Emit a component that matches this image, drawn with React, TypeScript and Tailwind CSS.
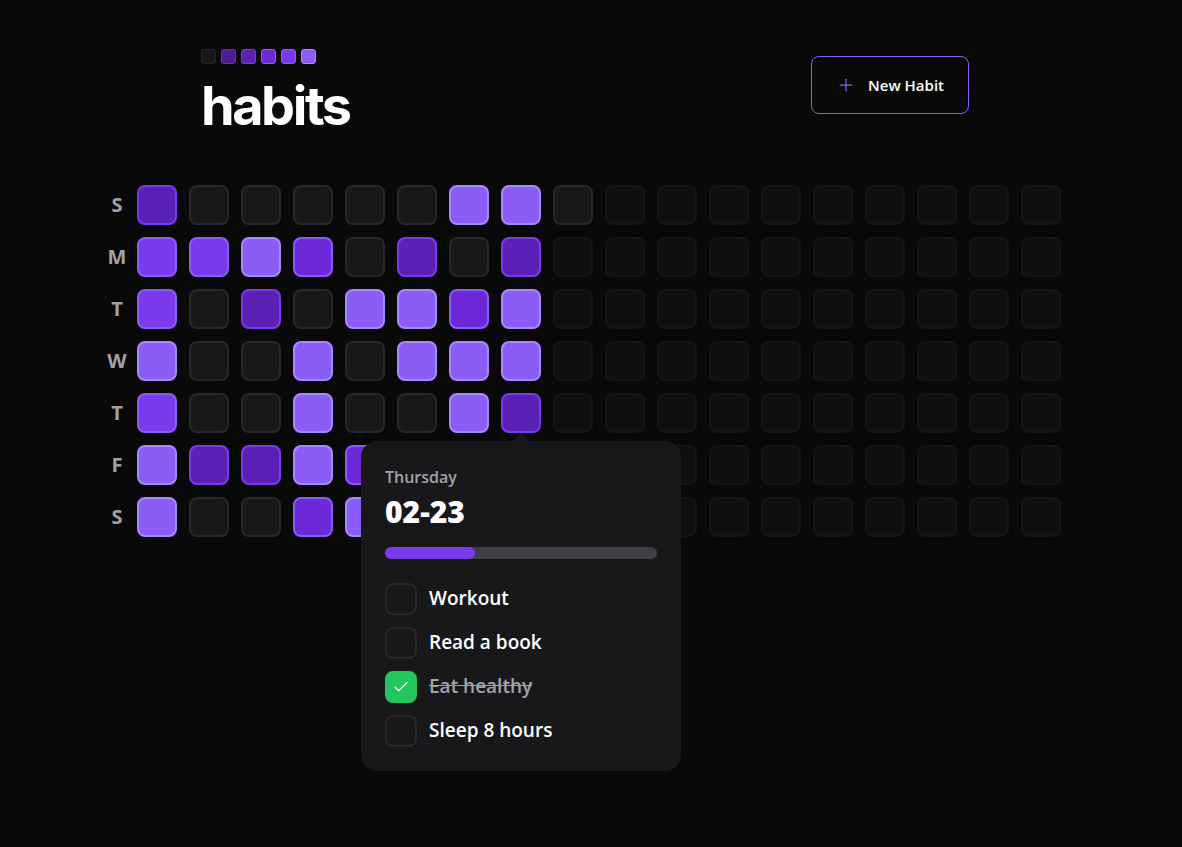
import { Check, Plus } from "lucide-react";

const weekDays = ["S", "M", "T", "W", "T", "F", "S"];

// one string per weekday row, one char per past column (0 = empty, 1..4 = completion level)
const pastRows = [
  "100000440",
  "33420101",
  "30104424",
  "40040444",
  "30040041",
  "41142304",
  "40024040",
];

const levelClass: Record<string, string> = {
  "0": "bg-[#18181b] border-[#27272a]",
  "1": "bg-[#5b21b6] border-[#7c3aed]",
  "2": "bg-[#6d28d9] border-[#8b5cf6]",
  "3": "bg-[#7c3aed] border-[#8b5cf6]",
  "4": "bg-[#8b5cf6] border-[#a78bfa]",
};

const habits = [
  { title: "Workout", done: false },
  { title: "Read a book", done: false },
  { title: "Eat healthy", done: true },
  { title: "Sleep 8 hours", done: false },
];

function Logo() {
  const squares = [
    "bg-[#18181b] border-[#27272a]",
    "bg-[#4c1d95] border-[#6d28d9]",
    "bg-[#5b21b6] border-[#7c3aed]",
    "bg-[#6d28d9] border-[#8b5cf6]",
    "bg-[#7c3aed] border-[#8b5cf6]",
    "bg-[#8b5cf6] border-[#a78bfa]",
  ];
  return (
    <div className="flex flex-col">
      <div className="mt-[3px] flex gap-[5px]">
        {squares.map((c, i) => (
          <div key={i} className={`h-[15px] w-[15px] rounded-[3px] border ${c}`} />
        ))}
      </div>
      <span className="mt-[15px] font-['Inter',sans-serif] text-[54px] leading-none font-bold tracking-[-0.045em] text-white">
        habits
      </span>
    </div>
  );
}

function DayPopover() {
  return (
    <div className="absolute top-[48px] left-1/2 z-10 w-[320px] -translate-x-1/2 rounded-2xl bg-[#18181b] p-6">
      <svg
        className="absolute -top-[8px] left-1/2 -translate-x-1/2"
        width="16"
        height="8"
        viewBox="0 0 16 8"
      >
        <path d="M0 8 L8 0 L16 8 Z" fill="#18181b" />
      </svg>
      <span className="block font-semibold text-[#a1a1aa]">Thursday</span>
      <span className="mt-1 block text-3xl leading-tight font-extrabold text-white">02-23</span>
      <div className="mt-4 h-3 w-full rounded-xl bg-[#3f3f46]">
        <div className="h-3 w-[33%] rounded-xl bg-[#7c3aed]" />
      </div>
      <div className="mt-6 flex flex-col gap-3">
        {habits.map((h) => (
          <div key={h.title} className="flex items-center gap-3">
            <div
              className={`flex h-8 w-8 items-center justify-center rounded-lg border-2 ${
                h.done ? "border-[#22c55e] bg-[#22c55e]" : "border-[#27272a] bg-[#18181b]"
              }`}
            >
              {h.done && <Check size={18} strokeWidth={1.5} className="text-white" />}
            </div>
            <span
              className={`text-[19px] leading-tight font-semibold ${
                h.done ? "text-[#a1a1aa] line-through" : "text-white"
              }`}
            >
              {h.title}
            </span>
          </div>
        ))}
      </div>
    </div>
  );
}

export default function App() {
  const columns = 18;
  const cells: { key: string; cls: string; selected: boolean }[] = [];
  for (let c = 0; c < columns; c++) {
    for (let r = 0; r < 7; r++) {
      const code = pastRows[r][c];
      cells.push({
        key: `${c}-${r}`,
        cls: code !== undefined ? levelClass[code] : "bg-[#18181b] border-[#27272a] opacity-40",
        selected: c === 7 && r === 4,
      });
    }
  }

  return (
    <div className="min-h-screen w-full bg-[#09090a] font-['Open_Sans',sans-serif] text-white">
      <div className="ml-[73px] w-[1024px] px-6 pt-[46px]">
        <header className="mx-auto flex w-[768px] items-start justify-between">
          <Logo />
          <button className="mt-[10px] flex items-center gap-3 rounded-lg border border-[#8b5cf6] px-6 py-4 text-[15px] leading-6 font-semibold">
            <Plus size={20} strokeWidth={1.5} className="text-[#8b5cf6]" />
            New Habit
          </button>
        </header>

        <div className="mt-[52px] flex">
          <div className="grid grid-rows-7 gap-3">
            {weekDays.map((d, i) => (
              <div
                key={i}
                className="flex h-10 w-10 items-center justify-center text-xl font-bold text-[#a1a1aa]"
              >
                {d}
              </div>
            ))}
          </div>
          <div className="grid grid-flow-col grid-rows-7 gap-3">
            {cells.map((cell) =>
              cell.selected ? (
                <div key={cell.key} className="relative h-10 w-10">
                  <div className={`h-10 w-10 rounded-lg border-2 ${cell.cls}`} />
                  <DayPopover />
                </div>
              ) : (
                <div key={cell.key} className={`h-10 w-10 rounded-lg border-2 ${cell.cls}`} />
              )
            )}
          </div>
        </div>
      </div>
    </div>
  );
}
